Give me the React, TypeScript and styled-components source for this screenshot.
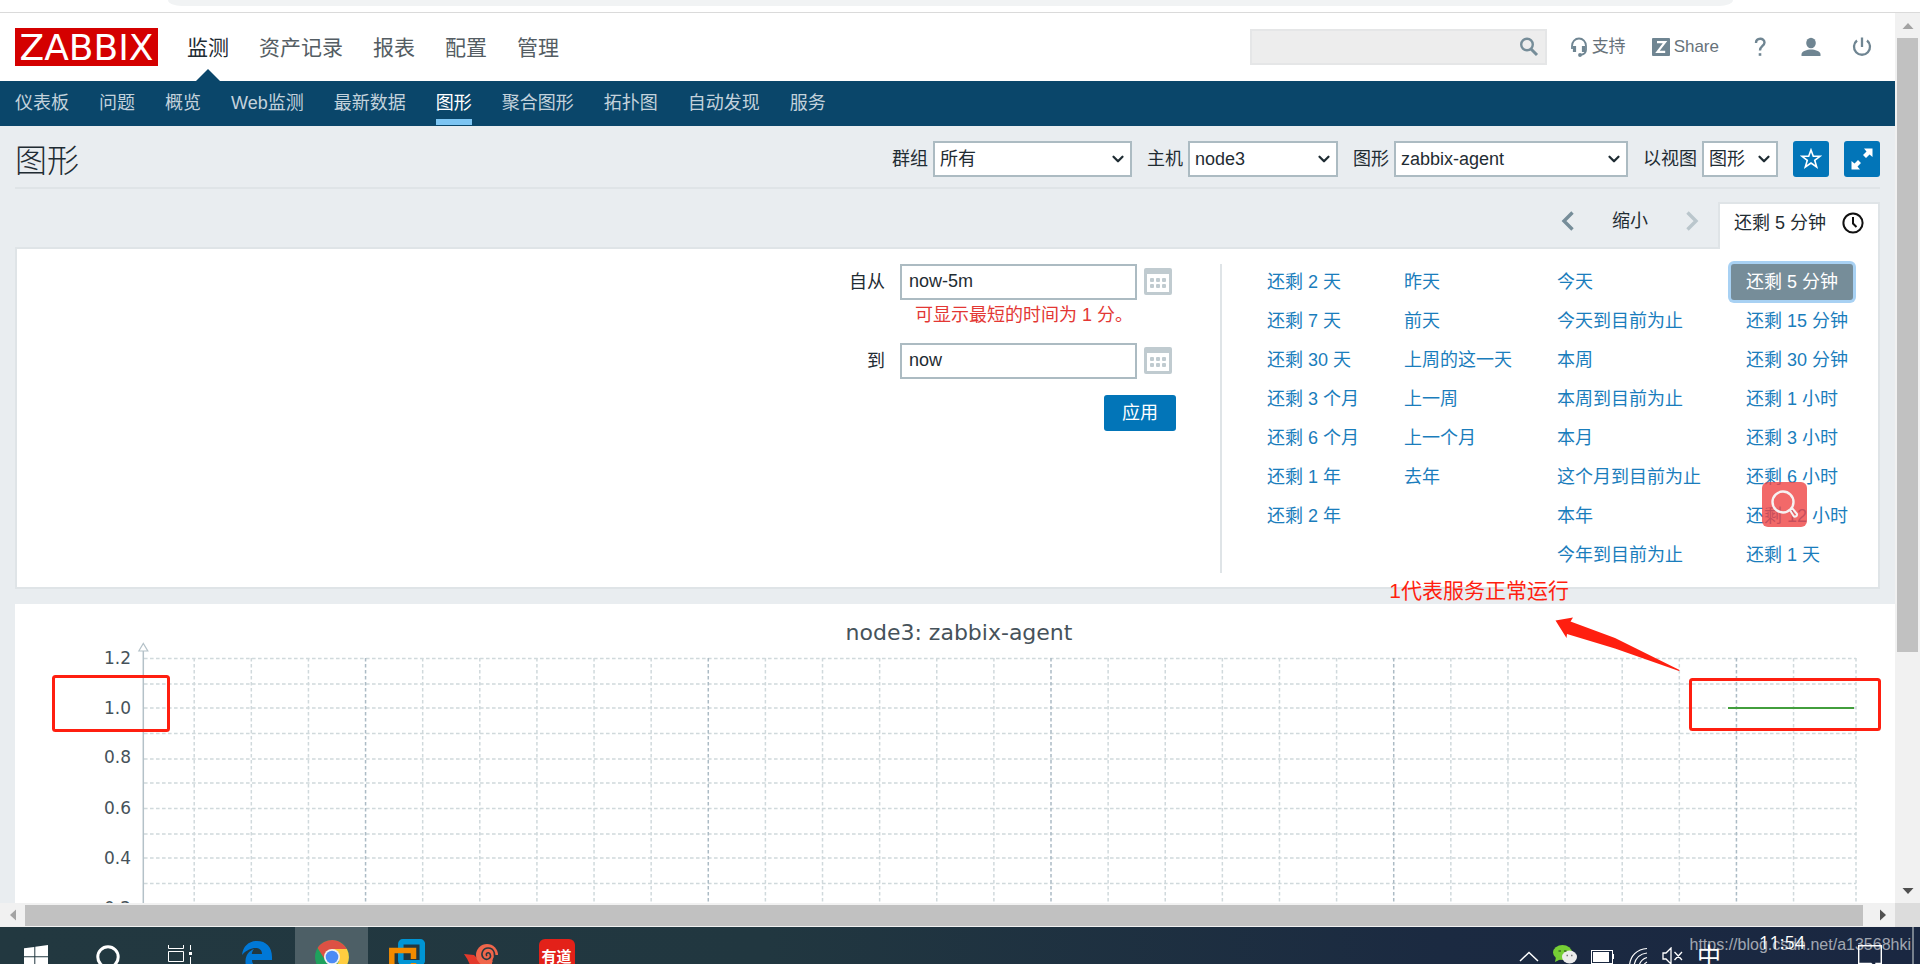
import React from 'react';
import styled, { createGlobalStyle, css } from 'styled-components';
import { ChevronDown } from 'lucide-react';

const GlobalStyle = createGlobalStyle`
  * { box-sizing: border-box; }
  body {
    margin: 0;
    background: #e9edf0;
    color: #1f2c33;
    font: 18px/24px "Liberation Sans", "Noto Sans CJK SC", sans-serif;
  }
  a { text-decoration: none; color: inherit; }
  ul { list-style: none; margin: 0; padding: 0; }
  button, input, select { font: inherit; color: inherit; margin: 0; }
  svg { display: block; }
`;

const Shell = styled.div`
  min-height: 100vh;
  display: flex;
  flex-direction: column;
`;

/* ---- browser frame ---- */
const BrowserEdge = styled.div`
  height: 13px;
  padding: 0 187px 0 168px;
  background: #fff;
  border-bottom: 1px solid #dadada;
`;
const Omnibox = styled.div`
  height: 6px;
  background: #f1f3f4;
  border-radius: 0 0 14px 14px / 0 0 6px 6px;
`;
const Viewport = styled.div`
  flex: 1;
  display: grid;
  grid-template-columns: minmax(0, 1fr) 25px;
  grid-template-rows: 1fr 24px;
`;
const VScroll = styled.div`
  display: flex;
  flex-direction: column;
  align-items: center;
  background: #f1f1f1;
`;
const HScroll = styled.div`
  display: flex;
  align-items: center;
  background: #f1f1f1;
`;
const ScrollEnd = styled.span`
  flex: 0 0 25px;
  width: 25px;
  height: 25px;
  display: grid;
  place-items: center;
`;
const VThumb = styled.div`
  width: 21px;
  height: 69%;
  background: #c1c1c1;
`;
const HThumb = styled.div`
  flex: 1;
  height: 21px;
  margin-right: 7px;
  background: #c1c1c1;
`;
const Spacer = styled.div`
  flex: 1;
`;
const ScrollCorner = styled.div`
  background: #dcdcdc;
`;

/* ---- header ---- */
const Header = styled.header`
  height: 68px;
  padding: 0 23px 0 15px;
  display: flex;
  align-items: center;
  background: #fff;
`;
const Logo = styled.a`
  width: 143px;
  height: 38px;
  display: flex;
  align-items: center;
  justify-content: center;
  background: #d40000;
  color: #fff;
  font: 36px/37px "DejaVu Sans", sans-serif;
`;
const MainMenu = styled.ul`
  flex: 1;
  display: flex;
  gap: 30px;
  margin-left: 29px;
  height: 100%;
`;
const MainItem = styled.a<{ $active?: boolean }>`
  position: relative;
  display: flex;
  height: 100%;
  align-items: center;
  padding-top: 2px;
  font-size: 21px;
  color: ${p => (p.$active ? '#1f2c33' : '#545d63')};
  ${p => p.$active && css`
    &::after {
      content: '';
      position: absolute;
      left: 50%;
      bottom: 0;
      margin-left: -12px;
      border: 12px solid transparent;
      border-top: 0;
      border-bottom-color: #0a466a;
    }
  `}
`;
const SearchBox = styled.form`
  display: flex;
  align-items: center;
  width: 297px;
  height: 36px;
  padding-right: 6px;
  background: #ededed;
  border: 2px solid #e5e6e7;
`;
const SearchInput = styled.input`
  flex: 1;
  min-width: 0;
  border: 0;
  background: none;
  outline: 0;
`;
const IconButton = styled.button`
  border: 0;
  padding: 0;
  background: none;
  display: grid;
  place-items: center;
`;
const Tools = styled.div`
  display: flex;
  align-items: center;
  margin-left: 23px;
  font-size: 17px;
  color: #67727a;
`;
const ToolLink = styled.a`
  display: flex;
  align-items: center;
  gap: 4px;
  margin-right: 26px;
`;
const ToolIcons = styled.div`
  display: flex;
  gap: 31px;
  margin-left: 5px;
`;

/* ---- sub navigation ---- */
const SubNav = styled.nav`
  height: 45px;
  padding: 0 15px;
  background: #0a466a;
`;
const SubMenu = styled.ul`
  display: flex;
  gap: 30px;
`;
const SubItem = styled.a<{ $active?: boolean }>`
  display: block;
  height: 44px;
  line-height: 44px;
  color: ${p => (p.$active ? '#fff' : '#c3d2dc')};
  border-bottom: 6px solid ${p => (p.$active ? '#7dc5f3' : 'transparent')};
`;

/* ---- page title and filters ---- */
const Main = styled.main`
  background: #e9edf0;
`;
const TitleBar = styled.div`
  margin: 0 15px;
  padding: 15px 0 10px;
  display: flex;
  align-items: center;
  border-bottom: 2px solid #dfe4e7;
`;
const Title = styled.h1`
  flex: 1;
  height: 36px;
  margin: 0;
  font-size: 32px;
  line-height: 40px;
  font-weight: 300;
`;
const Filters = styled.div`
  display: flex;
  align-items: center;
  gap: 15px;
`;
const Field = styled.label`
  display: flex;
  align-items: center;
  gap: 5px;
`;
const SelectWrap = styled.span<{ $width: number }>`
  position: relative;
  width: ${p => p.$width}px;
  svg {
    position: absolute;
    right: 5px;
    top: 9px;
    pointer-events: none;
  }
`;
const Select = styled.select`
  display: block;
  width: 100%;
  height: 36px;
  padding: 0 20px 0 5px;
  appearance: none;
  border: 2px solid #acbbc2;
  border-radius: 0;
  background: #fff;
`;
const SquareButton = styled.button`
  width: 36px;
  height: 36px;
  padding: 0;
  display: grid;
  place-items: center;
  border: 0;
  border-radius: 3px;
  background: #0275b8;
  color: #fff;
`;

/* ---- time selector ---- */
const TimeBar = styled.div`
  height: 45px;
  margin: 13px 15px 0;
  display: flex;
  justify-content: flex-end;
  align-items: flex-start;
`;
const TimeNav = styled.div`
  display: flex;
  align-items: center;
  height: 38px;
  gap: 38px;
  margin-right: 19px;
`;
const TimeTab = styled.a`
  position: relative;
  width: 162px;
  height: 47px;
  padding: 0 14px 8px;
  display: flex;
  align-items: center;
  justify-content: space-between;
  background: #fff;
  border: 2px solid #dfe4e7;
  border-bottom: 0;
`;
const TimePanel = styled.section`
  margin: 0 15px;
  padding: 15px 15px 14px;
  display: flex;
  justify-content: flex-end;
  background: #fff;
  border: 2px solid #dfe4e7;
`;
const RangeForm = styled.form`
  display: grid;
  grid-template-columns: auto 237px 39px;
  grid-template-rows: 36px 43px 36px 36px;
  align-items: center;
  margin-right: 44px;
  align-content: start;
`;
const RangeLabel = styled.label`
  text-align: right;
  margin-right: 15px;
`;
const RangeInput = styled.input`
  height: 36px;
  width: 100%;
  padding: 0 7px 2px;
  border: 2px solid #acbbc2;
  background: #fff;
`;
const CalendarButton = styled(IconButton)`
  justify-self: start;
  margin-left: 7px;
`;
const RangeError = styled.div`
  grid-column: 2 / 4;
  align-self: start;
  padding-left: 15px;
  line-height: 30px;
  color: #e33734;
`;
const ApplyButton = styled.button`
  grid-column: 2 / 4;
  justify-self: end;
  width: 72px;
  height: 36px;
  margin-top: 32px;
  padding: 0;
  border: 0;
  border-radius: 3px;
  background: #0275b8;
  color: #fff;
`;
const Presets = styled.div`
  display: flex;
  gap: 15px;
  padding-left: 30px;
  border-left: 2px solid #dfe4e7;
`;
const PresetColumn = styled.ul`
  display: flex;
  flex-direction: column;
  align-items: flex-start;
  gap: 3px;
`;
const Preset = styled.a<{ $active?: boolean }>`
  display: block;
  height: 36px;
  padding: 0 15px;
  line-height: 36px;
  white-space: nowrap;
  border-radius: 3px;
  color: #1a7dbc;
  ${p => p.$active && css`
    color: #fff;
    background: #768d99;
    box-shadow: 0 0 0 3px #a8d1f3;
  `}
`;
const FloatSearch = styled.button`
  position: absolute;
  right: 88px;
  top: -122px;
  width: 45px;
  height: 45px;
  padding: 0;
  display: grid;
  place-items: center;
  border: 0;
  border-radius: 6px;
  background: rgba(239, 68, 68, 0.8);
`;

/* ---- graph ---- */
const GraphPanel = styled.section`
  position: relative;
  margin: 15px 0 0 15px;
  background: #fff;
`;
const Chart = styled.svg`
  width: 100%;
  height: auto;
`;
const Note = styled.span`
  position: absolute;
  right: 326px;
  top: -25px;
  font-size: 21px;
  color: #ff1f10;
`;

/* ---- taskbar ---- */
const Taskbar = styled.footer`
  position: relative;
  height: 37px;
  overflow: hidden;
  display: flex;
  justify-content: space-between;
  background: linear-gradient(90deg, #223840 0%, #213740 40%, #1b2a41 75%, #1a2741 100%);
  color: #fff;
`;
const TaskGroup = styled.div`
  display: flex;
`;
const TaskApps = styled.div`
  display: flex;
  gap: 2px;
  margin-left: 4px;
`;
const TaskButton = styled.button<{ $width: number; $active?: boolean }>`
  width: ${p => p.$width}px;
  height: 60px;
  padding: 0;
  display: grid;
  place-items: center;
  border: 0;
  background: ${p => (p.$active ? '#4d5f66' : 'none')};
`;
const YoudaoTile = styled.span`
  width: 36px;
  height: 36px;
  border-radius: 6px;
  background: #e32119;
  color: #fff;
  font: 700 15px/34px "Noto Sans CJK SC", sans-serif;
`;
const Tray = styled.div`
  display: flex;
  align-items: center;
  height: 60px;
  gap: 14px;
  padding-right: 38px;
`;
const InputMode = styled.span`
  font-size: 24px;
`;
const Clock = styled.time`
  align-self: flex-start;
  margin: 3px 39px 0 24px;
  font-family: "Open Sans", sans-serif;
`;
const Watermark = styled.span`
  position: absolute;
  right: 9px;
  top: 6px;
  font-size: 16px;
  color: rgba(255, 255, 255, 0.6);
`;
const DesktopEdge = styled.span`
  position: absolute;
  right: 6px;
  top: 0;
  width: 2px;
  height: 100%;
  background: #77818d;
`;

const mainItems = ['监测', '资产记录', '报表', '配置', '管理'];
const subItems = ['仪表板', '问题', '概览', 'Web监测', '最新数据', '图形', '聚合图形', '拓扑图', '自动发现', '服务'];
const presets = [
  ['还剩 2 天', '还剩 7 天', '还剩 30 天', '还剩 3 个月', '还剩 6 个月', '还剩 1 年', '还剩 2 年'],
  ['昨天', '前天', '上周的这一天', '上一周', '上一个月', '去年'],
  ['今天', '今天到目前为止', '本周', '本周到目前为止', '本月', '这个月到目前为止', '本年', '今年到目前为止'],
  ['还剩 5 分钟', '还剩 15 分钟', '还剩 30 分钟', '还剩 1 小时', '还剩 3 小时', '还剩 6 小时', '还剩 12 小时', '还剩 1 天'],
];
const filters = [
  { label: '群组', value: '所有', width: 199 },
  { label: '主机', value: 'node3', width: 150 },
  { label: '图形', value: 'zabbix-agent', width: 234 },
  { label: '以视图', value: '图形', width: 76 },
];

const Triangle = ({ points, fill }: { points: string; fill: string }) => (
  <svg width="12" height="12" viewBox="0 0 12 12"><polygon points={points} fill={fill} /></svg>
);

const CalendarIcon = () => (
  <svg width="28" height="28" viewBox="0 0 28 28">
    <rect width="28" height="27" rx="2" fill="#c0cbd0" />
    <rect x="3" y="6" width="22" height="18" fill="#fff" />
    {[6, 12, 18].map(x => [10, 16].map(y => (
      <rect key={`${x}-${y}`} x={x} y={y} width="4" height="4" rx="1" fill="#c0cbd0" />
    )))}
  </svg>
);

const Chevron = ({ flip, color }: { flip?: boolean; color: string }) => (
  <svg width="13" height="20" viewBox="0 0 13 20" fill="none" stroke={color} strokeWidth="3.4">
    <path d={flip ? 'M1.5 1.5L10 10L1.5 18.5' : 'M11.5 1.5L3 10L11.5 18.5'} />
  </svg>
);

const verticals = Array.from({ length: 29 }, (_, i) => 179.2 + i * 57.12);
const horizontals = [54.5, 80, 104, 129.5, 155, 179, 204.5, 230, 254, 279.5];
const yLabels: [string, number][] = [['1.2', 54], ['1.0', 104], ['0.8', 153], ['0.6', 204], ['0.4', 254], ['0.2', 304]];

const Graph = () => (
  <Chart viewBox="0 0 1880 299" role="img" aria-label="node3: zabbix-agent">
    <g strokeWidth="1.5" strokeDasharray="3.6 2.4" stroke="#d0d9dc">
      {horizontals.map(y => <line key={y} x1="129" x2="1841" y1={y} y2={y} />)}
      {verticals.map((x, i) => (
        <line key={x} x1={x} x2={x} y1="54" y2="299" stroke={i % 6 === 3 ? '#acbbc5' : '#d0d9dc'} />
      ))}
      <line x1="1841" x2="1841" y1="54" y2="299" />
    </g>
    <line x1="128.3" x2="128.3" y1="47" y2="299" stroke="#b4c1c8" strokeWidth="1.5" />
    <path d="M123.8 47L128.3 39.5L132.8 47Z" fill="#fff" stroke="#b4c1c8" strokeWidth="1.2" />
    <g fontFamily="DejaVu Sans" fill="#46525a">
      <text x="944" y="36" fontSize="22" textAnchor="middle">node3: zabbix-agent</text>
      {yLabels.map(([t, y]) => <text key={t} x="116" y={y + 6} fontSize="17" textAnchor="end">{t}</text>)}
    </g>
    <line x1="1713" x2="1839" y1="104" y2="104" stroke="#429e3c" strokeWidth="2" />
    <g fill="none" stroke="#ff1f10" strokeWidth="3">
      <rect x="38.5" y="72.5" width="115" height="54" rx="2" />
      <rect x="1675.5" y="75.5" width="189" height="50" rx="2" />
    </g>
    <path d="M1540.5 16.5L1558 13.5L1555.5 17.5L1600 34L1664.500 66L1664 67L1600 44.500L1552 30L1551.500 34Z" fill="#ff1f10" />
  </Chart>
);

export default function App() {
  return (
    <Shell>
      <GlobalStyle />
      <BrowserEdge><Omnibox /></BrowserEdge>
      <Viewport>
        <Main>
          <Header>
            <Logo href="#">ZABBIX</Logo>
            <MainMenu>
              {mainItems.map((t, i) => <li key={t}><MainItem href="#" $active={i === 0}>{t}</MainItem></li>)}
            </MainMenu>
            <SearchBox>
              <SearchInput type="text" aria-label="搜索" />
              <IconButton type="button" aria-label="搜索">
                <svg width="20" height="20" viewBox="0 0 20 20" fill="none" stroke="#768d99">
                  <circle cx="8" cy="7.5" r="5.8" strokeWidth="2.4" />
                  <path d="M12 12L18 18" strokeWidth="3" />
                </svg>
              </IconButton>
            </SearchBox>
            <Tools>
              <ToolLink href="#">
                <svg width="18" height="20" viewBox="0 0 18 20" fill="none" stroke="#6f8592" strokeWidth="1.8">
                  <path d="M2 12V9A7 7.5 0 0 1 16 9V13C16 16 14 17.5 10 18" />
                  <path d="M4.5 9V15M13.5 9V15" strokeWidth="3.2" />
                  <circle cx="10" cy="18" r="1" fill="#6f8592" />
                </svg>
                支持
              </ToolLink>
              <ToolLink href="#">
                <svg width="18" height="18" viewBox="0 0 18 18">
                  <rect width="18" height="18" rx="1" fill="#6f8592" />
                  <path d="M5 4.2H13L5.5 13.8H13.2" fill="none" stroke="#fff" strokeWidth="2.2" />
                </svg>
                Share
              </ToolLink>
              <ToolIcons>
                <IconButton type="button" aria-label="帮助">
                  <svg width="20" height="20" viewBox="0 0 20 20" fill="none" stroke="#6f8592" strokeWidth="2.4">
                    <path d="M6 6C6 0.5 14.5 0.5 14.5 5.5C14.5 9 10 9 10 13.5" />
                    <path d="M8.700 17.500H11.300" strokeWidth="2.6" />
                  </svg>
                </IconButton>
                <IconButton type="button" aria-label="用户">
                  <svg width="20" height="20" viewBox="0 0 20 20" fill="#6f8592">
                    <ellipse cx="10" cy="6" rx="4.8" ry="5.2" />
                    <path d="M0.500 19V17C1 14 6 12.5 10 12.5S19 14 19.500 17V19Z" />
                  </svg>
                </IconButton>
                <IconButton type="button" aria-label="退出">
                  <svg width="20" height="20" viewBox="0 0 20 20" fill="none" stroke="#6f8592" strokeWidth="2.3">
                    <path d="M10 0.500V10M5 3.500A8 8 0 1 0 15 3.500" />
                  </svg>
                </IconButton>
              </ToolIcons>
            </Tools>
          </Header>
          <SubNav>
            <SubMenu>
              {subItems.map(t => <li key={t}><SubItem href="#" $active={t === '图形'}>{t}</SubItem></li>)}
            </SubMenu>
          </SubNav>
          <TitleBar>
            <Title>图形</Title>
            <Filters>
              {filters.map(f => (
                <Field key={f.label}>
                  {f.label}
                  <SelectWrap $width={f.width}>
                    <Select defaultValue={f.value}><option>{f.value}</option></Select>
                    <ChevronDown size={18} strokeWidth={3} />
                  </SelectWrap>
                </Field>
              ))}
              <SquareButton type="button" aria-label="收藏">
                <svg width="22" height="22" viewBox="0 0 22 22" fill="none" stroke="#fff" strokeWidth="1.6">
                  <path d="M11 2L13.3 8.3H20L14.7 12.3L16.7 19L11 15L5.3 19L7.3 12.3L2 8.3H8.7Z" />
                </svg>
              </SquareButton>
              <SquareButton type="button" aria-label="全屏">
                <svg width="22" height="22" viewBox="0 0 22 22" fill="#fff">
                  <path d="M13 0.5H21.5V9L18.5 6.5L15 10L12 7L15.5 3.5Z" />
                  <path d="M9 21.5H0.5V13L3.5 15.5L7 12L10 15L6.5 18.5Z" />
                </svg>
              </SquareButton>
            </Filters>
          </TitleBar>
          <TimeBar>
            <TimeNav>
              <IconButton type="button" aria-label="后退"><Chevron color="#768d99" /></IconButton>
              <IconButton type="button">缩小</IconButton>
              <IconButton type="button" aria-label="前进" disabled><Chevron flip color="#bac6cc" /></IconButton>
            </TimeNav>
            <TimeTab href="#">
              还剩 5 分钟
              <svg width="22" height="22" viewBox="0 0 22 22" fill="none" stroke="#111" strokeWidth="2">
                <circle cx="11" cy="11" r="9.6" />
                <path d="M11 5V11.5L14.5 15" />
              </svg>
            </TimeTab>
          </TimeBar>
          <TimePanel>
            <RangeForm>
              <RangeLabel htmlFor="from">自从</RangeLabel>
              <RangeInput id="from" type="text" defaultValue="now-5m" />
              <CalendarButton type="button" aria-label="选择开始日期"><CalendarIcon /></CalendarButton>
              <RangeError>可显示最短的时间为 1 分。</RangeError>
              <RangeLabel htmlFor="to">到</RangeLabel>
              <RangeInput id="to" type="text" defaultValue="now" />
              <CalendarButton type="button" aria-label="选择结束日期"><CalendarIcon /></CalendarButton>
              <ApplyButton type="button">应用</ApplyButton>
            </RangeForm>
            <Presets>
              {presets.map((column, c) => (
                <PresetColumn key={c}>
                  {column.map((t, i) => <li key={t}><Preset href="#" $active={c === 3 && i === 0}>{t}</Preset></li>)}
                </PresetColumn>
              ))}
            </Presets>
          </TimePanel>
          <GraphPanel>
            <Graph />
            <Note>1代表服务正常运行</Note>
            <FloatSearch type="button" aria-label="放大">
              <svg width="28" height="30" viewBox="0 0 28 30" fill="none" stroke="#f6f2f2" strokeWidth="2.4">
                <circle cx="12" cy="12" r="10.5" />
                <path d="M19 20L21.5 18.5L26 24C26.5 26 24 27.5 22.5 26Z" strokeWidth="2" />
              </svg>
            </FloatSearch>
          </GraphPanel>
        </Main>
        <VScroll>
          <ScrollEnd><Triangle points="0.5,9 6,3 11.5,9" fill="#a3a3a3" /></ScrollEnd>
          <VThumb />
          <Spacer />
          <ScrollEnd><Triangle points="0.5,3 6,9 11.5,3" fill="#505050" /></ScrollEnd>
        </VScroll>
        <HScroll>
          <ScrollEnd><Triangle points="9,0.5 3,6 9,11.5" fill="#a3a3a3" /></ScrollEnd>
          <HThumb />
          <ScrollEnd><Triangle points="3,0.5 9,6 3,11.5" fill="#505050" /></ScrollEnd>
        </HScroll>
        <ScrollCorner />
      </Viewport>
      <Taskbar>
        <TaskGroup>
          <TaskButton type="button" $width={72} aria-label="开始">
            <svg width="24" height="24" viewBox="0 0 24 24" fill="#fff">
              <path d="M0 3.3L10.3 2V11.3H0ZM11.3 1.8L24 0V11.3H11.3ZM0 12.3H10.3V22L0 20.7ZM11.3 12.3H24V24L11.3 22.2Z" />
            </svg>
          </TaskButton>
          <TaskButton type="button" $width={72} aria-label="搜索">
            <svg width="24" height="24" viewBox="0 0 24 24" fill="none" stroke="#fff" strokeWidth="3">
              <circle cx="12" cy="12" r="10.2" />
            </svg>
          </TaskButton>
          <TaskButton type="button" $width={72} aria-label="任务视图">
            <svg width="24" height="24" viewBox="0 0 24 24" fill="none" stroke="#fff">
              <path d="M0.5 0V3.5H15.5V0M0.5 6.5H15.5V16.5H0.5ZM0.5 24V19.5H15.5V24M22.5 0V5M22.5 12V24" />
              <rect x="21" y="7" width="3" height="3" fill="#fff" stroke="none" />
            </svg>
          </TaskButton>
          <TaskApps>
            <TaskButton type="button" $width={73} aria-label="Edge">
              <svg width="32" height="36" viewBox="0 0 32 36">
                <path d="M1 16C2 7 8 2 16 2C25 2 31 8 31 18V21H11C11 28 20 31 28 26V33C16 38 4 34 4.5 22C4.7 16 8 12 13 10C11 12 11 14 10.8 15H21C21 7 9 7 1 16Z" fill="#0078d7" />
              </svg>
            </TaskButton>
            <TaskButton type="button" $width={73} $active aria-label="Chrome">
              <svg width="34" height="34" viewBox="0 0 34 34">
                <circle cx="17" cy="17" r="17" fill="#1fa15d" />
                <path d="M17 9H31.9A17 17 0 0 1 17 34L24 21Z" fill="#ffcd40" />
                <path d="M2.6 8A17 17 0 0 1 31.9 9H17L9.5 19Z" fill="#dd5144" />
                <circle cx="17" cy="17" r="8" fill="#f1f1f1" />
                <circle cx="17" cy="17" r="6.3" fill="#4c8bf5" />
              </svg>
            </TaskButton>
            <TaskButton type="button" $width={73} aria-label="VMware">
              <svg width="36" height="36" viewBox="0 0 36 36" fill="none" strokeWidth="5.5">
                <rect x="11.8" y="2.8" width="21.5" height="21" rx="2" stroke="#0095d5" />
                <path d="M24.500 20V11.5H2.8V31H24.500V24" stroke="#f38b00" />
              </svg>
            </TaskButton>
            <TaskButton type="button" $width={73} aria-label="Xshell">
              <svg width="36" height="28" viewBox="0 0 36 28" fill="none">
                <path d="M0 11L10 12L17 19L28 19V28H6Q8 22 0 11Z" fill="#e3392b" />
                <circle cx="23" cy="12" r="11" fill="#f0664b" />
                <path d="M23 13C21 11 24 8 26 11C28 15 23 18 19.5 15C16 11 19 5 24 5C31 5 32 13 29 18" stroke="#263941" strokeWidth="1.6" />
                <path d="M28 20L31 12H35V28H28Z" fill="#223840" />
              </svg>
            </TaskButton>
            <TaskButton type="button" $width={73} aria-label="有道词典"><YoudaoTile>有道</YoudaoTile></TaskButton>
          </TaskApps>
        </TaskGroup>
        <Tray>
          <svg width="20" height="12" viewBox="0 0 20 12" fill="none" stroke="#fff" strokeWidth="1.5"><path d="M1 10L10 1.5L19 10" /></svg>
          <svg width="24" height="24" viewBox="0 0 24 24">
            <ellipse cx="9.5" cy="7.5" rx="9.5" ry="7.5" fill="#76ce35" />
            <path d="M3 12L2 17L8 14Z" fill="#76ce35" />
            <ellipse cx="16.5" cy="12" rx="7.5" ry="6.5" fill="#ececec" />
            <path d="M5.5 6H8M11 6H13.5" stroke="#3c6e24" strokeWidth="1.6" />
            <path d="M13.5 10.5H15M18 10.5H19.5" stroke="#777" strokeWidth="1.5" />
          </svg>
          <svg width="23" height="14" viewBox="0 0 23 14">
            <rect x="0.5" y="0.5" width="21" height="13" fill="none" stroke="#fff" />
            <rect x="2" y="2" width="16" height="10" fill="#fff" />
            <path d="M22.5 4V9" stroke="#fff" />
          </svg>
          <svg width="20" height="20" viewBox="0 0 20 20" fill="none" stroke="#fff" strokeWidth="1.2">
            <path d="M1.5 19C2 9 9 2 19 1.5M6 19C7 12 11 7 19 6M11 19C12 14 14 12 19 10.5M15.5 19C16 17 17 16 19 15" />
          </svg>
          <svg width="21" height="20" viewBox="0 0 21 20" fill="none" stroke="#fff" strokeWidth="1.3">
            <path d="M1 6H4L9 1V17L4 12H1ZM12.5 5L20 13M20 5L12.5 13" />
          </svg>
          <InputMode>中</InputMode>
          <Clock>11:54</Clock>
          <svg width="24" height="24" viewBox="0 0 24 24" fill="none" stroke="#fff" strokeWidth="1.4">
            <path d="M0.7 0.7H23.3V18.5H18V23L13 18.5H0.7Z" />
          </svg>
        </Tray>
        <Watermark>https://blog.csdn.net/a13568hki</Watermark>
        <DesktopEdge />
      </Taskbar>
    </Shell>
  );
}
